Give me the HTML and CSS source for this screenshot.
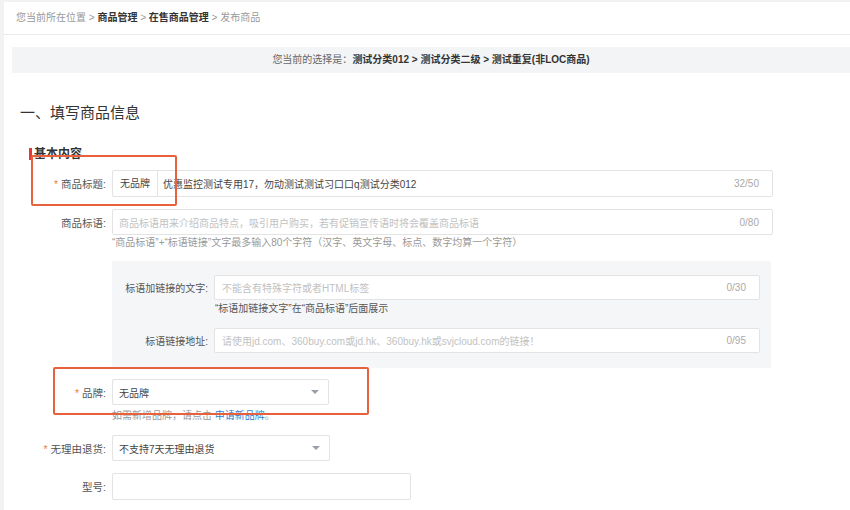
FILE: index.html
```html
<!DOCTYPE html>
<html lang="zh-CN">
<head>
  <meta charset="UTF-8">
  <title>发布商品</title>
  <link rel="stylesheet" href="styles.css">
</head>
<body>
  <div class="page">
    <div class="crumbs">
      您当前所在位置 &gt; <b>商品管理</b> &gt; <b>在售商品管理</b> &gt; 发布商品
    </div>

    <div class="choice">
      您当前的选择是：<b>测试分类012 &gt; 测试分类二级 &gt; 测试重复(非LOC商品)</b>
    </div>

    <h2 class="step-title">一、填写商品信息</h2>

    <div class="form">
      <div class="section-title">基本内容</div>

      <!-- 商品标题 -->
      <div class="row row-title">
        <label class="label"><i class="req">*</i>商品标题:</label>
        <div class="input wide">
          <span class="prefix">无品牌</span>
          <span class="value">优惠监控测试专用17，勿动测试测试习口口q测试分类012</span>
          <span class="count">32/50</span>
        </div>
        <div class="mark mark-title"></div>
      </div>

      <!-- 商品标语 -->
      <div class="row row-slogan">
        <label class="label">商品标语:</label>
        <div class="input wide">
          <span class="placeholder">商品标语用来介绍商品特点，吸引用户购买，若有促销宣传语时将会覆盖商品标语</span>
          <span class="count">0/80</span>
        </div>
      </div>
      <div class="tip tip-slogan">“商品标语”+“标语链接”文字最多输入80个字符（汉字、英文字母、标点、数字均算一个字符）</div>

      <div class="link-box">
        <div class="row">
          <label class="label sub">标语加链接的文字:</label>
          <div class="input sub-input">
            <span class="placeholder">不能含有特殊字符或者HTML标签</span>
            <span class="count">0/30</span>
          </div>
        </div>
        <div class="tip tip-link">“标语加链接文字”在“商品标语”后面展示</div>
        <div class="row row-url">
          <label class="label sub">标语链接地址:</label>
          <div class="input sub-input">
            <span class="placeholder">请使用jd.com、360buy.com或jd.hk、360buy.hk或svjcloud.com的链接！</span>
            <span class="count">0/95</span>
          </div>
        </div>
      </div>

      <!-- 品牌 -->
      <div class="row row-brand">
        <label class="label"><i class="req">*</i>品牌:</label>
        <div class="input select">
          <span class="value">无品牌</span>
          <span class="caret"></span>
        </div>
        <div class="mark mark-brand"></div>
      </div>
      <div class="tip tip-brand">如需新增品牌，请点击 <a href="#">申请新品牌</a>。</div>

      <div class="row row-return">
        <label class="label"><i class="req">*</i>无理由退货:</label>
        <div class="input select">
          <span class="value">不支持7天无理由退货</span>
          <span class="caret"></span>
        </div>
      </div>

      <div class="row row-model">
        <label class="label">型号:</label>
        <div class="input model"></div>
      </div>
    </div>
  </div>
</body>
</html>
```

FILE: styles.css
```css
body {
  margin: 0;
  background-color: #f2f2f2;
  font-family: "Liberation Sans", "Noto Sans CJK SC", sans-serif;
  color: #333;
  font-size: 11px;
}
.page {
  margin: 2px 0 0 4px;
  height: 508px;
  background-color: white;
  overflow: hidden;
}
.crumbs {
  height: 32px;
  line-height: 32px;
  padding-left: 12px;
  font-size: 10px;
  color: #999;
  border-bottom: 1px solid #e9e9e9;
}
.crumbs b {
  color: #333;
}
.choice {
  margin: 12px 0 0 8px;
  height: 26px;
  line-height: 26px;
  background-color: #f3f4f6;
  text-align: center;
  font-size: 10px;
  color: #666;
}
.choice b {
  color: #333;
}
.step-title {
  margin: 29px 0 0 16px;
  font-size: 15px;
  font-weight: normal;
  color: #333;
  line-height: 22px;
}
.form {
  position: relative;
}
.section-title {
  margin: 24px 0 0 25px;
  padding-left: 2px;
  border-left: 3px solid #e4393c;
  font-size: 12px;
  font-weight: bold;
  line-height: 12px;
}
.row {
  position: relative;
  display: flex;
  align-items: center;
  gap: 6px;
}
.label {
  width: 102px;
  text-align: right;
  color: #555;
  font-size: 10.5px;
  flex-shrink: 0;
}
.req {
  font-style: normal;
  color: #ef7d3c;
  margin-right: 3px;
}
.input {
  display: flex;
  align-items: center;
  height: 25px;
  border: 1px solid #e3e3e3;
  border-radius: 2px;
  background-color: white;
  padding: 0 13px 0 6px;
  color: #444;
  font-size: 10px;
  white-space: nowrap;
}
.wide {
  width: 640px;
}
.row-title {
  margin-top: 10px;
}
.row-title .input {
  padding-left: 0;
  width: 646px;
}
.prefix {
  padding: 0 7px;
  line-height: 25px;
  border-right: 1px solid #e3e3e3;
  margin-right: 5px;
}
.value {
  flex: 1;
}
.placeholder {
  flex: 1;
  color: #c2c2c2;
}
.count {
  color: #aaa;
  margin-left: 8px;
}
.row-slogan {
  margin-top: 12px;
}
.row-slogan .input {
  height: 24px;
}
.tip {
  margin-left: 108px;
  font-size: 10px;
  color: #999;
  line-height: 14px;
}
.tip-slogan {
  margin-top: 1px;
}
.link-box {
  margin: 11px 0 0 108px;
  width: 659px;
  padding: 14px 0 15px;
  background-color: #f5f6f8;
}
.link-box .label {
  width: 96px;
  font-size: 10px;
}
.sub-input {
  width: 524px;
  height: 23px;
  padding-left: 7px;
}
.tip-link {
  margin: 2px 0 0 103px;
  color: #555;
}
.row-url {
  margin-top: 12px;
}
.select {
  width: 200px;
  height: 24px;
  padding-right: 9px;
}
.caret {
  width: 0;
  height: 0;
  border-left: 4px solid transparent;
  border-right: 4px solid transparent;
  border-top: 4px solid #9aa0a8;
}
.row-brand {
  margin-top: 11px;
}
.tip-brand {
  margin-top: 4px;
}
.tip-brand a {
  color: #2d7fd3;
  text-decoration: none;
}
.row-return {
  margin-top: 12px;
}
.row-return .select {
  width: 201px;
}
.row-model {
  margin-top: 12px;
}
.model {
  width: 278px;
}
.mark {
  position: absolute;
  border: 2px solid #e8603c;
  border-radius: 2px;
  pointer-events: none;
}
.mark-title {
  left: 27px;
  top: -15px;
  width: 142px;
  height: 47px;
}
.mark-brand {
  left: 49px;
  top: -12px;
  width: 312px;
  height: 44px;
}
```
